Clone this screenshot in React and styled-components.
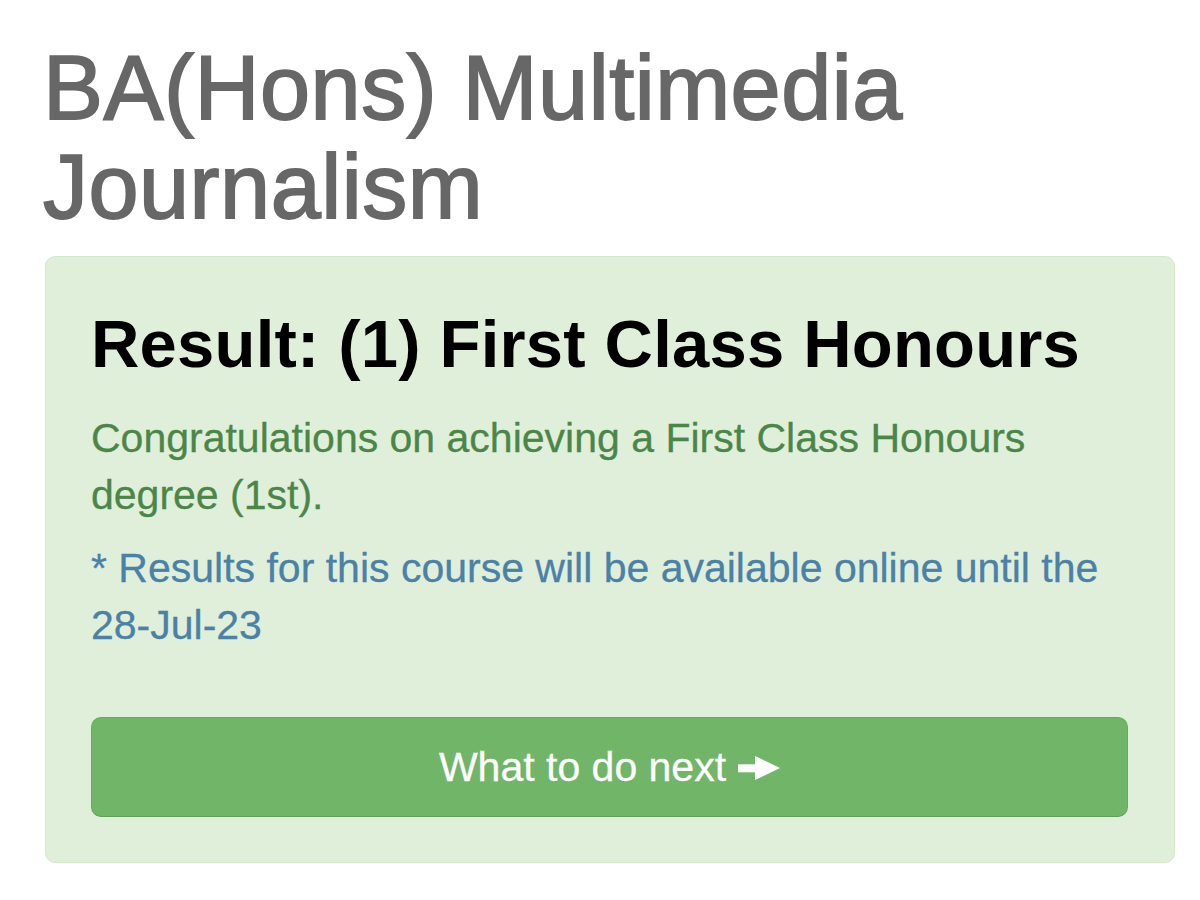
import React from 'react';
import styled, {createGlobalStyle} from 'styled-components';

const GlobalStyle = createGlobalStyle`
  html, body {
    margin: 0;
    padding: 0;
    background: #fff;
  }
  body {
    font-family: "Liberation Sans", Arial, Helvetica, sans-serif;
  }
`;

const Page = styled.div`
  width: 1200px;
  padding: 39px 25px 0 45px;
  box-sizing: border-box;
`;

// heavier strokes to get close to the medium weight of the original title
const Title = styled.h1`
  margin: 0 0 19px -2px;
  font-size: 90px;
  line-height: 99px;
  font-weight: 400;
  color: #676767;
  letter-spacing: 0.5px;
  -webkit-text-stroke: 1.8px #676767;
`;

const Alert = styled.div`
  width: 1130px;
  box-sizing: border-box;
  padding: 50px 46px 45px 45px;
  background: #e0efd9;
  border: 1px solid #d5e8c8;
  border-radius: 10px;
`;

const ResultHeading = styled.h2`
  margin: 0 0 29px;
  font-size: 67px;
  line-height: 74px;
  font-weight: 700;
  color: #000;
  letter-spacing: 0.2px;
`;

const Note = styled.p`
  margin: 0 0 ${p => p.$gap || 0}px;
  font-size: 41px;
  line-height: 57px;
  color: ${p => p.$color};
  -webkit-text-stroke: 0.3px ${p => p.$color};
`;

const NextButton = styled.a`
  display: flex;
  align-items: center;
  justify-content: center;
  gap: 12px;
  height: 100px;
  margin-top: 63px;
  box-sizing: border-box;
  background: #71b569;
  border: 1px solid #66ab5f;
  border-bottom-color: #5e9f57;
  border-radius: 10px;
  color: #fff;
  font-size: 41px;
  line-height: 57px;
  text-decoration: none;
  -webkit-text-stroke: 0.3px #fff;
`;

const Arrow = () => (
  <svg width="42" height="24" viewBox="0 0 42 24" style={{marginTop: 1}}>
    <rect x="0" y="8.3" width="20" height="8" fill="#fff" />
    <polygon points="17,0 42,12 17,24" fill="#fff" />
  </svg>
);

export default function App() {
  return (
    <Page>
      <GlobalStyle />
      <Title>
        BA(Hons) Multimedia
        <br />
        Journalism
      </Title>
      <Alert>
        <ResultHeading>Result: (1) First Class Honours</ResultHeading>
        <Note $color="#4b8649" $gap={16}>
          Congratulations on achieving a First Class Honours degree (1st).
        </Note>
        <Note $color="#4a81a8">
          * Results for this course will be available online until the 28-Jul-23
        </Note>
        <NextButton href="#">
          What to do next
          <Arrow />
        </NextButton>
      </Alert>
    </Page>
  );
}
